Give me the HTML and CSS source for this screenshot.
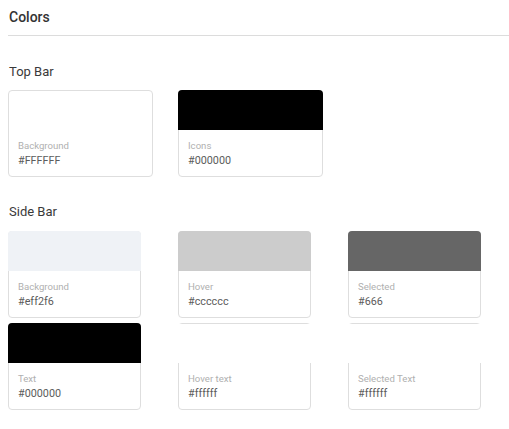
FILE: index.html
```html
<!DOCTYPE html>
<html>
<head>
<meta charset="utf-8">
<link rel="stylesheet" href="styles.css">
</head>
<body>
<div class="page">
  <h1 class="title">Colors</h1>
  <hr class="rule">
  <section class="group">
    <h2 class="group-title">Top Bar</h2>
    <div class="cards cards-top">
      <div class="card card-wide">
        <div class="swatch swatch-clear"></div>
        <div class="card-body"><div class="label">Background</div><div class="hex">#FFFFFF</div></div>
      </div>
      <div class="card card-wide">
        <div class="swatch swatch-black"></div>
        <div class="card-body"><div class="label">Icons</div><div class="hex">#000000</div></div>
      </div>
    </div>
  </section>
  <section class="group group-side">
    <h2 class="group-title">Side Bar</h2>
    <div class="cards cards-side">
      <div class="card">
        <div class="swatch swatch-light"></div>
        <div class="card-body"><div class="label">Background</div><div class="hex">#eff2f6</div></div>
      </div>
      <div class="card">
        <div class="swatch swatch-hover"></div>
        <div class="card-body"><div class="label">Hover</div><div class="hex">#cccccc</div></div>
      </div>
      <div class="card">
        <div class="swatch swatch-selected"></div>
        <div class="card-body"><div class="label">Selected</div><div class="hex">#666</div></div>
      </div>
      <div class="card">
        <div class="swatch swatch-black"></div>
        <div class="card-body"><div class="label">Text</div><div class="hex">#000000</div></div>
      </div>
      <div class="card">
        <div class="swatch swatch-white"></div>
        <div class="card-body"><div class="label">Hover text</div><div class="hex">#ffffff</div></div>
      </div>
      <div class="card">
        <div class="swatch swatch-white"></div>
        <div class="card-body"><div class="label">Selected Text</div><div class="hex">#ffffff</div></div>
      </div>
    </div>
  </section>
</div>
</body>
</html>
```

FILE: styles.css
```css
html, body {
  margin: 0;
  padding: 0;
  background: #fff;
}
body {
  font-family: Roboto, "Liberation Sans", sans-serif;
  color: #333;
}
.page {
  padding: 9px 0 0 8px;
}
.title {
  margin: 0;
  font-size: 14px;
  line-height: 16px;
  font-weight: 500;
  color: #333;
  padding-left: 1px;
}
.rule {
  margin: 10px 0 0 0;
  border: 0;
  border-top: 1px solid #dcdcdc;
  height: 0;
}
.group {
  margin-top: 28px;
}
.group-side {
  margin-top: 27px;
}
.group-title {
  margin: 0 0 9px 0;
  font-size: 13px;
  line-height: 16px;
  font-weight: 400;
  color: #3a3a3a;
  padding-left: 1px;
}
.cards {
  display: flex;
  flex-wrap: wrap;
}
.cards-top {
  column-gap: 25px;
  margin-top: 10px;
}
.cards-side {
  column-gap: 37px;
  row-gap: 5px;
  margin-top: 11px;
}
.card {
  box-sizing: border-box;
  width: 133px;
  height: 87px;
  border: 1px solid #dedede;
  border-radius: 4px;
  background: #fff;
  display: flex;
  flex-direction: column;
}
.card-wide {
  width: 145px;
}
.swatch {
  height: 40px;
  margin: -1px -1px 0 -1px;
  border-radius: 4px 4px 0 0;
  flex: none;
}
.swatch-clear {
  background: transparent;
  margin: 0;
  height: 39px;
}
.swatch-white {
  background: #ffffff;
  margin: 0 -1px;
  height: 39px;
  border-radius: 0;
}
.swatch-black { background: #000000; }
.swatch-light { background: #eff2f6; }
.swatch-hover { background: #cccccc; }
.swatch-selected { background: #666666; }
.card-body {
  padding: 10px 9px 0 9px;
}
.label {
  font-size: 9.6px;
  line-height: 12px;
  color: #b0b0b0;
}
.hex {
  margin-top: 2px;
  font-size: 10.8px;
  line-height: 14px;
  color: #5c5c5c;
}
```
